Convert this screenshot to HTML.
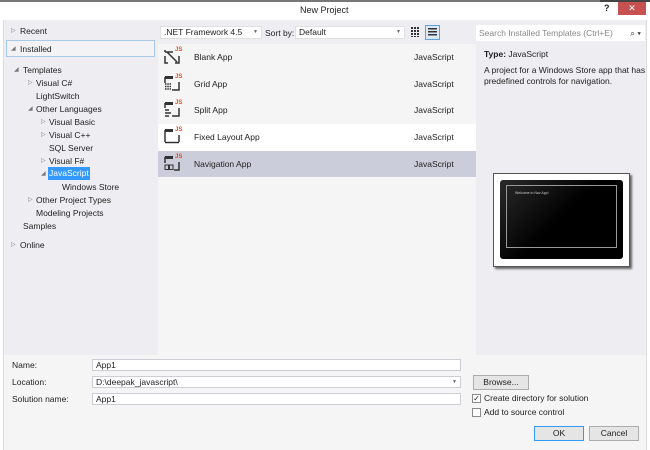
<!DOCTYPE html>
<html><head><style>
*{margin:0;padding:0;box-sizing:border-box}
body{width:650px;height:450px;background:#fff;font-family:"Liberation Sans",sans-serif;font-size:8.5px;color:#1e1e1e;position:relative;overflow:hidden}
.a{position:absolute;white-space:nowrap}
.tri{font-size:6px;color:#777}
.inp{position:absolute;background:#fff;border:1px solid #ccced3;height:12px;padding-left:3px;line-height:10px}
.btn{position:absolute;background:#e5e5e5;border:1px solid #acacac;text-align:center;line-height:13px;height:15px}
.cb{position:absolute;width:9px;height:9px;border:1px solid #8a8a8a;background:#fff;font-size:8px;line-height:7px;text-align:center}
</style></head><body>
<div class="a" style="left:0;top:0;width:650px;height:2px;background:#444"></div>
<div class="a" style="left:0;top:0;width:600px;height:2px;background:#777"></div>
<div class="a" style="left:300px;top:5px;font-size:9px">New Project</div>
<div class="a" style="left:604px;top:3px;font-weight:bold;font-size:9px">?</div>
<div class="a" style="left:618px;top:2px;width:28px;height:13px;background:#c75050;color:#fff;text-align:center;font-size:9px;line-height:13px">✕</div>
<div class="a" style="left:3px;top:20px;width:644px;height:430px;background:#eeeef2;border-left:1px solid #ddd;border-right:1px solid #ddd"></div>
<div class="a" style="left:4px;top:355px;width:642px;height:95px;background:#f5f5f5"></div>
<!-- left -->
<div class="a tri" style="left:11px;top:27px">▷</div><div class="a" style="left:20px;top:26px">Recent</div>
<div class="a" style="left:6px;top:40px;width:149px;height:17px;border:1px solid #a8c8ec;background:#f3f3f6"></div>
<div class="a tri" style="left:11px;top:45px">◢</div><div class="a" style="left:20px;top:44px">Installed</div>
<div class="a tri" style="left:14px;top:66px">◢</div><div class="a" style="left:23px;top:65px">Templates</div>
<div class="a tri" style="left:28px;top:79px">▷</div><div class="a" style="left:36px;top:78px">Visual C#</div>
<div class="a" style="left:36px;top:91px">LightSwitch</div>
<div class="a tri" style="left:28px;top:105px">◢</div><div class="a" style="left:36px;top:104px">Other Languages</div>
<div class="a tri" style="left:41px;top:118px">▷</div><div class="a" style="left:49px;top:117px">Visual Basic</div>
<div class="a tri" style="left:41px;top:131px">▷</div><div class="a" style="left:49px;top:130px">Visual C++</div>
<div class="a" style="left:49px;top:143px">SQL Server</div>
<div class="a tri" style="left:41px;top:157px">▷</div><div class="a" style="left:49px;top:156px">Visual F#</div>
<div class="a tri" style="left:41px;top:170px">◢</div><div class="a" style="left:48px;top:167px;background:#3399ff;color:#fff;padding:1px 1px;height:13px">JavaScript</div>
<div class="a" style="left:62px;top:182px">Windows Store</div>
<div class="a tri" style="left:28px;top:196px">▷</div><div class="a" style="left:36px;top:195px">Other Project Types</div>
<div class="a" style="left:36px;top:208px">Modeling Projects</div>
<div class="a" style="left:23px;top:221px">Samples</div>
<div class="a tri" style="left:11px;top:241px">▷</div><div class="a" style="left:20px;top:240px">Online</div>
<!-- middle -->
<div class="a" style="left:160px;top:26px;width:102px;height:13px;background:#fff;border:1px solid #e0e0e0;padding-left:3px;line-height:11px">.NET Framework 4.5<span style="position:absolute;right:3px;font-size:5px;color:#666">▼</span></div>
<div class="a" style="left:265px;top:28px">Sort by:</div>
<div class="a" style="left:295px;top:26px;width:110px;height:13px;background:#fff;border:1px solid #e0e0e0;padding-left:3px;line-height:11px">Default<span style="position:absolute;right:3px;font-size:5px;color:#666">▼</span></div>
<div class="a" style="left:411px;top:27px;width:9px;height:10px;background:repeating-linear-gradient(90deg,#333 0 2px,transparent 2px 3px);-webkit-mask:repeating-linear-gradient(#000 0 2px,transparent 2px 3px)"></div>
<div class="a" style="left:425px;top:25px;width:15px;height:15px;border:1px solid #5ea1e0;background:#dbe9f8"></div>
<div class="a" style="left:428px;top:28px;width:9px;height:9px;background:repeating-linear-gradient(#333 0 1.5px,transparent 1.5px 3px)"></div>
<div class="a" style="left:158px;top:44px;width:318px;height:311px;background:#f5f5f5"></div>
<div class="a" style="left:158px;top:124px;width:318px;height:27px;background:#fff"></div>
<div class="a" style="left:158px;top:151px;width:318px;height:26px;background:#cbcdda"></div>
<svg class="a" style="left:163px;top:44px" width="20" height="140" viewBox="0 0 20 140" fill="none" stroke="#333" stroke-width="1.5">
<g><path d="M2 8h8M2 6v2M4 8l10 10M2 12v7h3M12 19h4v-7"/><text x="12" y="7" font-size="6" fill="#e05020" stroke="none" font-weight="bold">JS</text></g>
<g transform="translate(0,27)"><rect x="2" y="5" width="8" height="3" fill="#333" stroke="none"/><path d="M2 6v6M9 19h7v-8"/><path d="M2 13h6M2 15.5h6M2 18h6" stroke-dasharray="1.5 .8"/><text x="12" y="7" font-size="6" fill="#e05020" stroke="none" font-weight="bold">JS</text></g>
<g transform="translate(0,53)"><rect x="2" y="5" width="8" height="3" fill="#333" stroke="none"/><path d="M2 6v5M9 19h7v-8M2 13h4M2 16h6M2 19h4"/><text x="12" y="7" font-size="6" fill="#e05020" stroke="none" font-weight="bold">JS</text></g>
<g transform="translate(0,80)"><rect x="2" y="5" width="8" height="3" fill="#333" stroke="none"/><path d="M2 6v12M16 11v7M2 18.5h14"/><text x="12" y="7" font-size="6" fill="#e05020" stroke="none" font-weight="bold">JS</text></g>
<g transform="translate(0,107)"><rect x="2" y="5" width="8" height="3" fill="#333" stroke="none"/><path d="M2 6v6M11 19h5v-8"/><rect x="2" y="14" width="3.5" height="4.5" stroke-width="1"/><rect x="6.5" y="14" width="3.5" height="4.5" stroke-width="1"/><text x="12" y="7" font-size="6" fill="#e05020" stroke="none" font-weight="bold">JS</text></g>
</svg>
<div class="a" style="left:194px;top:52px">Blank App</div><div class="a" style="left:414px;top:52px">JavaScript</div>
<div class="a" style="left:194px;top:79px">Grid App</div><div class="a" style="left:414px;top:79px">JavaScript</div>
<div class="a" style="left:194px;top:105px">Split App</div><div class="a" style="left:414px;top:105px">JavaScript</div>
<div class="a" style="left:194px;top:132px">Fixed Layout App</div><div class="a" style="left:414px;top:132px">JavaScript</div>
<div class="a" style="left:194px;top:159px">Navigation App</div><div class="a" style="left:414px;top:159px">JavaScript</div>
<!-- right -->
<div class="a" style="left:476px;top:25px;width:169px;height:16px;background:#fff;color:#888;padding-left:3px;line-height:16px">Search Installed Templates (Ctrl+E)<span style="position:absolute;right:4px;color:#333">⌕ ▾</span></div>
<div class="a" style="left:484px;top:49px"><b>Type:</b> JavaScript</div>
<div class="a" style="left:484px;top:65px;line-height:10.5px">A project for a Windows Store app that has<br>predefined controls for navigation.</div>
<div class="a" style="left:493px;top:173px;width:137px;height:94px;background:#fff;border:1px solid #555;box-shadow:2px 2px 2px #666"></div>
<div class="a" style="left:500px;top:180px;width:123px;height:79px;background:linear-gradient(135deg,#2a2a2a,#000 50%);border-radius:3px"></div>
<div class="a" style="left:506px;top:185px;width:111px;height:63px;border:1px solid #999"></div>
<div class="a" style="left:515px;top:191px;color:#ccc;font-size:3.5px">Welcome to Nav App!</div>
<!-- bottom -->
<div class="a" style="left:12px;top:360px">Name:</div>
<div class="a" style="left:12px;top:377px">Location:</div>
<div class="a" style="left:12px;top:394px">Solution name:</div>
<div class="inp" style="left:92px;top:359px;width:369px">App1</div>
<div class="inp" style="left:92px;top:376px;width:369px">D:\deepak_javascript\<span style="position:absolute;right:3px;font-size:5px;color:#666">▼</span></div>
<div class="inp" style="left:92px;top:393px;width:369px">App1</div>
<div class="btn" style="left:473px;top:375px;width:56px">Browse...</div>
<div class="cb" style="left:472px;top:394px">✓</div><div class="a" style="left:484px;top:393px">Create directory for solution</div>
<div class="cb" style="left:472px;top:408px"></div><div class="a" style="left:484px;top:407px">Add to source control</div>
<div class="btn" style="left:534px;top:426px;width:50px;border-color:#3399ff">OK</div>
<div class="btn" style="left:589px;top:426px;width:50px">Cancel</div>
</body></html>
